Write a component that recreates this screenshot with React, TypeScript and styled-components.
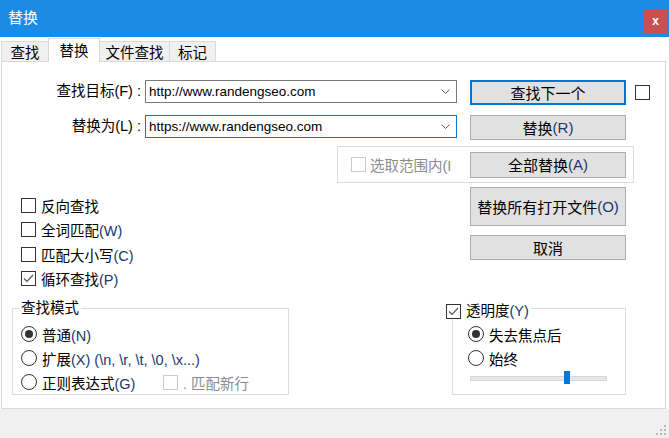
import React from 'react'
import styled, { createGlobalStyle } from 'styled-components'

const GlobalStyle = createGlobalStyle`
  html, body {
    margin: 0;
    padding: 0;
    background: #f0f0f0;
  }
  body {
    font-family: "Liberation Sans", "Noto Sans CJK SC", sans-serif;
    font-size: 14.5px;
    color: #000;
  }
  * {
    box-sizing: border-box;
  }
`

const Window = styled.div`
  width: 669px;
  height: 438px;
  display: flex;
  flex-direction: column;
  background: #f0f0f0;
  overflow: hidden;
`

const TitleBar = styled.div`
  height: 37px;
  flex: none;
  display: flex;
  justify-content: space-between;
  align-items: flex-start;
  padding: 0 1px 0 8px;
  background: #1a8ce6;
  color: #fff;
`

const Title = styled.span`
  font-size: 15px;
  line-height: 36px;
`

const CloseButton = styled.div`
  margin-top: 9px;
  width: 25px;
  height: 24px;
  display: flex;
  align-items: center;
  justify-content: center;
  background: #c75050;
  color: #fff;
  font: bold 12px "Liberation Sans", sans-serif;
`

const TabArea = styled.div`
  height: 372px;
  flex: none;
  display: flex;
  flex-direction: column;
  background: #fff;
`

const TabBar = styled.div`
  height: 24px;
  flex: none;
  display: flex;
  align-items: flex-end;
  padding-left: 1px;
`

const Tab = styled.div<{ $active?: boolean; $w: number }>`
  position: relative;
  z-index: ${(p) => (p.$active ? 1 : 0)};
  width: ${(p) => p.$w}px;
  height: ${(p) => (p.$active ? 24 : 20)}px;
  margin-bottom: ${(p) => (p.$active ? -1 : 0)}px;
  margin-left: -1px;
  padding-bottom: ${(p) => (p.$active ? 3 : 0)}px;
  display: flex;
  align-items: center;
  justify-content: center;
  border: 1px solid #d9d9d9;
  border-bottom: none;
  background: ${(p) => (p.$active ? '#fff' : '#f0f0f0')};
  white-space: nowrap;
  &:first-child {
    margin-left: 0;
  }
`

const Panel = styled.div`
  height: 348px;
  margin: 0 3px 0 1px;
  display: flex;
  flex-direction: column;
  border: 1px solid #d9d9d9;
  background: #fff;
`

const FormRow = styled.div<{ $top: number }>`
  height: 25px;
  margin-top: ${(p) => p.$top}px;
  display: flex;
  align-items: flex-start;
`

const FieldLabel = styled.div`
  width: 139px;
  line-height: 23px;
  text-align: right;
  white-space: nowrap;
`

const Combo = styled.div<{ $focused?: boolean }>`
  width: 312px;
  height: 23px;
  margin-left: 4px;
  display: flex;
  align-items: center;
  justify-content: space-between;
  padding: 0 6px 0 3px;
  border: 1px solid ${(p) => (p.$focused ? '#0078d7' : '#7a7a7a')};
  font-size: 13.5px;
  white-space: nowrap;
`

const ActionButton = styled.div<{ $default?: boolean; $h?: number }>`
  width: 156px;
  height: ${(p) => p.$h ?? 25}px;
  flex: none;
  display: flex;
  align-items: center;
  justify-content: center;
  border: ${(p) => (p.$default ? '2px solid #0078d7' : '1px solid #adadad')};
  background: #e1e1e1;
  font-size: 15px;
  white-space: nowrap;
`

const RowButton = styled(ActionButton)`
  margin-left: 13px;
`

const Hint = styled.span`
  color: #22366e;
`

const Box = styled.div<{ $disabled?: boolean }>`
  width: 15px;
  height: 15px;
  flex: none;
  display: flex;
  align-items: center;
  justify-content: center;
  border: 1px solid ${(p) => (p.$disabled ? '#cccccc' : '#333')};
  background: #fff;
`

const SideBox = styled(Box)`
  margin-left: 9px;
  align-self: center;
`

const SelectionGroup = styled.div`
  width: 297px;
  height: 37px;
  margin: 6px 0 0 335px;
  display: flex;
  align-items: center;
  padding: 0 6px 0 13px;
  border: 1px solid #dcdcdc;
`

const SelectionText = styled.span`
  width: 83px;
  margin-left: 4px;
  white-space: nowrap;
  color: #8c8c8c;
`

const GroupButton = styled(ActionButton)`
  margin-left: 17px;
`

const MiddleSection = styled.div`
  margin-top: 4px;
  display: grid;
  grid-template-columns: 468px 156px;
`

const CheckList = styled.div`
  padding: 6px 0 0 19px;
  display: flex;
  flex-direction: column;
`

const Option = styled.div<{ $h?: number }>`
  height: ${(p) => p.$h ?? 24}px;
  display: flex;
  align-items: center;
  gap: 5px;
  white-space: nowrap;
`

const ButtonColumn = styled.div`
  display: flex;
  flex-direction: column;
  gap: 9px;
`

const BottomSection = styled.div`
  margin-top: 17px;
  padding-left: 10px;
  display: flex;
  gap: 163px;
`

const GroupBox = styled.div<{ $w: number; $padLeft: number }>`
  position: relative;
  width: ${(p) => p.$w}px;
  height: 87px;
  padding: 13px 0 0 ${(p) => p.$padLeft}px;
  border: 1px solid #dcdcdc;
`

const Caption = styled.div<{ $left: number; $top: number }>`
  position: absolute;
  left: ${(p) => p.$left}px;
  top: ${(p) => p.$top}px;
  height: 16px;
  padding: 0 2px 0 1px;
  display: flex;
  align-items: center;
  gap: 5px;
  background: #fff;
  line-height: 16px;
  white-space: nowrap;
`

const Radio = styled.div<{ $checked?: boolean }>`
  width: 16px;
  height: 16px;
  flex: none;
  display: flex;
  align-items: center;
  justify-content: center;
  border: 1px solid #333;
  border-radius: 50%;
  &::after {
    content: '';
    display: ${(p) => (p.$checked ? 'block' : 'none')};
    width: 8px;
    height: 8px;
    border-radius: 50%;
    background: #333;
  }
`

const ModeRow = styled.div`
  height: 24px;
  display: grid;
  grid-template-columns: 142px auto;
  align-items: center;
`

const DisabledText = styled.span`
  color: #8c8c8c;
`

const Slider = styled.div`
  position: relative;
  width: 137px;
  height: 14px;
  margin: 1px 0 0 2px;
  display: flex;
  align-items: center;
`

const Track = styled.div`
  width: 100%;
  height: 5px;
  border: 1px solid #d6d6d6;
  background: #e7e7e7;
`

const Thumb = styled.div`
  position: absolute;
  top: 0;
  width: 6px;
  height: 13px;
  background: #0078d7;
`

const Footer = styled.div`
  flex: 1;
  display: flex;
  justify-content: flex-end;
  align-items: flex-end;
  padding: 0 2px 2px 0;
`

const Chevron = () => (
  <svg width="9" height="5" viewBox="0 0 9 5">
    <polyline points="0.5,0.5 4.5,4.5 8.5,0.5" fill="none" stroke="#606060" strokeWidth="1" />
  </svg>
)

const Check = () => (
  <svg width="13" height="13" viewBox="0 0 13 13">
    <polyline points="2,6.5 5,9.5 11,3" fill="none" stroke="#555" strokeWidth="1.2" />
  </svg>
)

const Grip = () => {
  const dots: React.ReactElement[] = []
  for (let r = 0; r < 3; r++) {
    for (let c = 2 - r; c < 3; c++) {
      dots.push(<rect key={`${r}-${c}`} x={c * 4 + 1} y={r * 4 + 1} width="2" height="2" fill="#b5b5b5" />)
    }
  }
  return (
    <svg width="12" height="12" viewBox="0 0 12 12">
      {dots}
    </svg>
  )
}

const CheckOption: React.FC<{ checked?: boolean; children: React.ReactNode }> = ({ checked, children }) => (
  <Option $h={24.5}>
    <Box>{checked && <Check />}</Box>
    <span>{children}</span>
  </Option>
)

const RadioOption: React.FC<{ checked?: boolean; children: React.ReactNode }> = ({ checked, children }) => (
  <Option>
    <Radio $checked={checked} />
    <span>{children}</span>
  </Option>
)

const tabs = [
  { label: '查找', w: 48 },
  { label: '替换', w: 52, active: true },
  { label: '文件查找', w: 71 },
  { label: '标记', w: 47 },
]

const opacity = 0.7

export default function App() {
  return (
    <>
      <GlobalStyle />
      <Window>
        <TitleBar>
          <Title>替换</Title>
          <CloseButton>x</CloseButton>
        </TitleBar>
        <TabArea>
          <TabBar>
            {tabs.map((t) => (
              <Tab key={t.label} $w={t.w} $active={t.active}>
                {t.label}
              </Tab>
            ))}
          </TabBar>
          <Panel>
            <FormRow $top={18}>
              <FieldLabel>查找目标(F) :</FieldLabel>
              <Combo>
                <span>http://www.randengseo.com</span>
                <Chevron />
              </Combo>
              <RowButton $default>查找下一个</RowButton>
              <SideBox />
            </FormRow>
            <FormRow $top={10}>
              <FieldLabel>替换为(L) :</FieldLabel>
              <Combo $focused>
                <span>https://www.randengseo.com</span>
                <Chevron />
              </Combo>
              <RowButton>
                替换<Hint>(R)</Hint>
              </RowButton>
            </FormRow>
            <SelectionGroup>
              <Box $disabled />
              <SelectionText>选取范围内(I</SelectionText>
              <GroupButton $h={26}>
                全部替换<Hint>(A)</Hint>
              </GroupButton>
            </SelectionGroup>
            <MiddleSection>
              <CheckList>
                <CheckOption>反向查找</CheckOption>
                <CheckOption>
                  全词匹配<Hint>(W)</Hint>
                </CheckOption>
                <CheckOption>
                  匹配大小写<Hint>(C)</Hint>
                </CheckOption>
                <CheckOption checked>
                  循环查找<Hint>(P)</Hint>
                </CheckOption>
              </CheckList>
              <ButtonColumn>
                <ActionButton $h={39}>
                  替换所有打开文件<Hint>(O)</Hint>
                </ActionButton>
                <ActionButton>取消</ActionButton>
              </ButtonColumn>
            </MiddleSection>
            <BottomSection>
              <GroupBox $w={277} $padLeft={8}>
                <Caption $left={7} $top={-9}>查找模式</Caption>
                <RadioOption checked>
                  普通<Hint>(N)</Hint>
                </RadioOption>
                <RadioOption>
                  扩展<Hint>(X) (\n, \r, \t, \0, \x...)</Hint>
                </RadioOption>
                <ModeRow>
                  <RadioOption>
                    正则表达式<Hint>(G)</Hint>
                  </RadioOption>
                  <Option>
                    <Box $disabled />
                    <DisabledText>. 匹配新行</DisabledText>
                  </Option>
                </ModeRow>
              </GroupBox>
              <GroupBox $w={174} $padLeft={15}>
                <Caption $left={-8} $top={-6}>
                  <Box>
                    <Check />
                  </Box>
                  <span>
                    透明度<Hint>(Y)</Hint>
                  </span>
                </Caption>
                <RadioOption checked>失去焦点后</RadioOption>
                <RadioOption>始终</RadioOption>
                <Slider>
                  <Track />
                  <Thumb style={{ left: `${Math.round(opacity * 137) - 2}px` }} />
                </Slider>
              </GroupBox>
            </BottomSection>
          </Panel>
        </TabArea>
        <Footer>
          <Grip />
        </Footer>
      </Window>
    </>
  )
}
